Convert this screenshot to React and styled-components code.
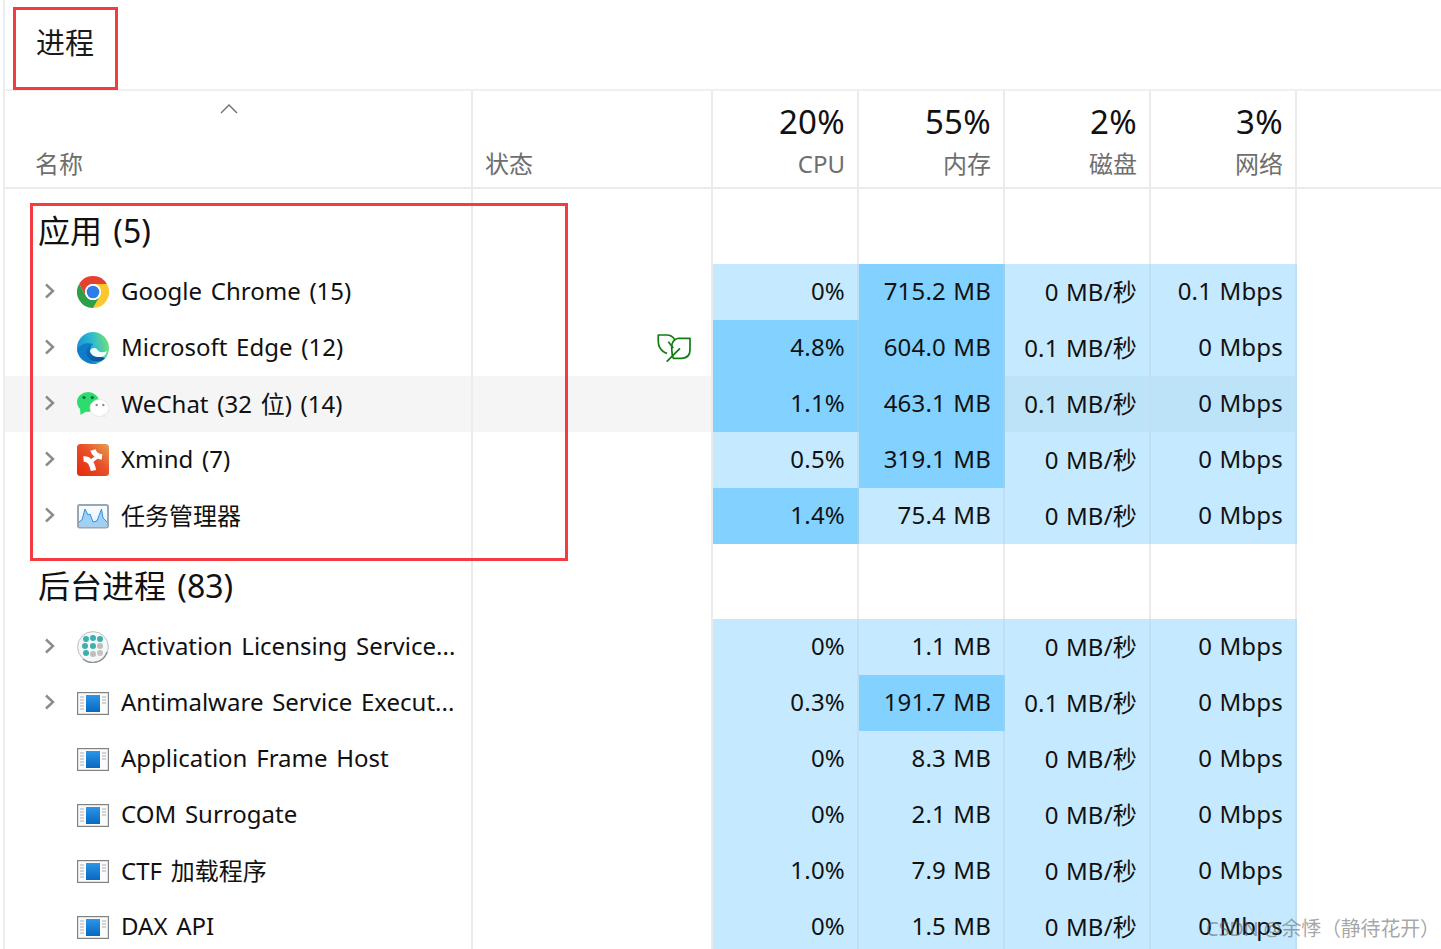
import styled, { createGlobalStyle } from "styled-components";

const GlobalStyle = createGlobalStyle`
  html, body {
    margin: 0;
    padding: 0;
    height: 949px;
    overflow: hidden;
    background: #fff;
  }
  body {
    font-family: "Noto Sans", "Noto Sans CJK SC", sans-serif;
    color: #111;
  }
`;

const COLUMNS = "468px 240px 146px 146px 146px 146px 1fr";

const Page = styled.div`
  position: relative;
  width: 1441px;
  height: 949px;
  overflow: hidden;
  box-sizing: border-box;
  margin-left: 3px;
  border-left: 2px solid #e9eef3;
`;

const TitleBar = styled.div`
  height: 82px;
  padding: 0 0 7px 31px;
  display: flex;
  align-items: center;
  border-bottom: 2px solid #f0f0f0;
  font-size: 29px;
  color: #1a1a1a;
`;

const HeaderRow = styled.div`
  display: grid;
  grid-template-columns: ${COLUMNS};
  height: 96px;
  border-bottom: 2px solid #ebebeb;
`;

const HeaderCell = styled.div`
  box-sizing: border-box;
  border-right: 2px solid #ebebeb;
  display: flex;
  flex-direction: column;
  justify-content: flex-end;
  align-items: ${(p) => (p.$left ? "flex-start" : "flex-end")};
  padding: ${(p) => (p.$left ? "0 0 6px 12px" : "0 12px 6px 0")};
  padding-left: ${(p) => (p.$name ? "30px" : "")};
  position: relative;
  &:last-child {
    border-right: none;
  }
`;

const SortCaret = styled.svg`
  position: absolute;
  top: 12px;
  left: 214px;
  width: 20px;
  height: 12px;
`;

const BigValue = styled.div`
  font-size: 33px;
  line-height: 44px;
  letter-spacing: 0.3px;
  margin-bottom: 3px;
  color: #111;
`;

const ColumnLabel = styled.div`
  font-size: 24px;
  line-height: 34px;
  color: #6e6e6e;
`;

const SectionRow = styled.div`
  display: grid;
  grid-template-columns: ${COLUMNS};
  height: 75px;
`;

const SectionCell = styled.div`
  border-right: 2px solid #ebebeb;
  &:last-child {
    border-right: none;
  }
`;

const SectionName = styled(SectionCell)`
  font-size: 32px;
  line-height: 40px;
  word-spacing: 3px;
  padding: 22px 0 0 33px;
  color: #111;
  white-space: nowrap;
`;

const Row = styled.div`
  display: grid;
  grid-template-columns: ${COLUMNS};
  height: 56px;
`;

const NameCell = styled.div`
  display: flex;
  align-items: center;
  padding-left: 38px;
  border-right: 2px solid #ebebeb;
  background: ${(p) => (p.$hover ? "#f5f5f5" : "#fff")};
  font-size: 24px;
  white-space: nowrap;
  color: #111;
`;

const NameText = styled.span`
  word-spacing: 2.5px;
  margin-top: -3px;
`;

const ChevronSlot = styled.div`
  display: flex;
  width: 14px;
  height: 20px;
  margin: -3px 20px 0 0;
  flex: none;
`;

const AppIcon = styled.svg`
  width: 32px;
  height: 32px;
  margin-right: 12px;
  flex: none;
`;

const StatusCell = styled.div`
  display: flex;
  align-items: center;
  justify-content: flex-end;
  padding: 0 20px 3px 0;
  border-right: 2px solid #ebebeb;
  background: ${(p) => (p.$hover ? "#f5f5f5" : "#fff")};
`;

const HeatCell = styled.div`
  display: flex;
  align-items: center;
  justify-content: flex-end;
  padding: 0 12px 3px 0;
  font-size: 24px;
  letter-spacing: 0.2px;
  word-spacing: 0.8px;
  color: #111;
  background: ${(p) =>
    p.$hot ? "#83d1ff" : p.$hover ? "#bde3f9" : "#c5e9ff"};
  border-right: 2px solid
    ${(p) => (p.$hot ? "#9bcfee" : "#c1dff2")};
`;

const Blank = styled.div``;

const Highlight = styled.div`
  position: absolute;
  box-sizing: border-box;
  border: 3px solid #f43b3f;
  left: ${(p) => p.$x - 5}px;
  top: ${(p) => p.$y}px;
  width: ${(p) => p.$w}px;
  height: ${(p) => p.$h}px;
  pointer-events: none;
`;

const Watermark = styled.div`
  position: absolute;
  left: 1201px;
  top: 915px;
  font-size: 20px;
  line-height: 28px;
  letter-spacing: -0.2px;
  color: rgba(90, 90, 90, 0.55);
  white-space: nowrap;
`;

function Chevron() {
  return (
    <ChevronSlot>
      <svg width="14" height="20" viewBox="0 0 14 20">
        <path d="M3 3.5L10 10L3 16.5" fill="none" stroke="#8a8a8a" strokeWidth="2.4" />
      </svg>
    </ChevronSlot>
  );
}

function ChromeIcon() {
  return (
    <AppIcon viewBox="0 0 32 32">
      <path d="M29.86 8A16 16 0 0 0 2.14 8L9.07 20A8 8 0 0 1 16 8Z" fill="#e5412f" />
      <path d="M16 32A16 16 0 0 0 29.86 8L16 8A8 8 0 0 1 22.93 20Z" fill="#fbc72c" />
      <path d="M2.14 8A16 16 0 0 0 16 32L22.93 20A8 8 0 0 1 9.07 20Z" fill="#2f9e48" />
      <circle cx="16" cy="16" r="8" fill="#fff" />
      <circle cx="16" cy="16" r="6.3" fill="#2f7de8" />
    </AppIcon>
  );
}

function EdgeIcon() {
  return (
    <AppIcon viewBox="0 0 32 32">
      <defs>
        <linearGradient id="edgeTop" x1="0" y1="0.6" x2="1" y2="0.4">
          <stop offset="0" stopColor="#1a8ed2" />
          <stop offset="0.5" stopColor="#2bb8d2" />
          <stop offset="1" stopColor="#6fe07c" />
        </linearGradient>
        <linearGradient id="edgeLow" x1="0" y1="0" x2="1" y2="1">
          <stop offset="0" stopColor="#0e74c0" />
          <stop offset="1" stopColor="#0b4f96" />
        </linearGradient>
      </defs>
      <circle cx="16" cy="16" r="16" fill="url(#edgeTop)" />
      <path d="M0 18C3 12 10 10 16 12C10 13 8 19 10 24C12 28 17 31 21 31.3C12 33 2 28 0 18Z" fill="#0f7cc8" />
      <path d="M16 12C10 13 7.5 19 10 24C13 30 21 32 28 26.5L24 24C19 25.5 14 24 13 19C13 16 14 13.5 16 12Z" fill="url(#edgeLow)" />
      <path d="M13 19C14 15.5 19 15 20.5 18C22.5 20.5 26 21 30 19C29.5 22 27 25 24.5 25C19 25.5 14 24 13 19Z" fill="#f3fbff" />
    </AppIcon>
  );
}

function WeChatIcon() {
  return (
    <AppIcon viewBox="0 0 32 32">
      <ellipse cx="11" cy="14" rx="11" ry="10" fill="#2ddc6e" />
      <path d="M3 20L3.5 27L10 23Z" fill="#2ddc6e" />
      <circle cx="7" cy="9.5" r="1.6" fill="#0d6b34" />
      <circle cx="15.3" cy="9.5" r="1.6" fill="#0d6b34" />
      <ellipse cx="22.5" cy="20" rx="9.5" ry="8.5" fill="#fff" stroke="#e2e2e2" strokeWidth="0.8" />
      <path d="M25 27L29.5 30L28.5 25Z" fill="#ececec" />
      <circle cx="19.7" cy="17" r="1.2" fill="#8f8f8f" />
      <circle cx="26.3" cy="17" r="1.2" fill="#8f8f8f" />
    </AppIcon>
  );
}

function XmindIcon() {
  return (
    <AppIcon viewBox="0 0 32 32">
      <defs>
        <linearGradient id="xmindBg" x1="0" y1="1" x2="1" y2="0">
          <stop offset="0" stopColor="#e6270a" />
          <stop offset="0.55" stopColor="#e8502a" />
          <stop offset="1" stopColor="#e6a050" />
        </linearGradient>
      </defs>
      <rect width="32" height="32" rx="3.5" fill="url(#xmindBg)" />
      <g fill="none" stroke="#fff" strokeWidth="5.4">
        <path d="M16 6C17 10 21 12.5 25 13" />
        <path d="M6.5 15C12 14.5 15 19 16.5 26.5" />
        <path d="M20 13L13 18" strokeWidth="3.4" />
      </g>
    </AppIcon>
  );
}

function TaskManagerIcon() {
  return (
    <AppIcon viewBox="0 0 32 32">
      <defs>
        <linearGradient id="tmBg" x1="0" y1="0" x2="0" y2="1">
          <stop offset="0" stopColor="#fafdff" />
          <stop offset="1" stopColor="#e4f1fc" />
        </linearGradient>
      </defs>
      <rect x="1" y="5" width="30" height="22.4" rx="1.4" fill="url(#tmBg)" stroke="#9aa7b2" strokeWidth="2" />
      <path d="M2 22L5 20L8 9L11 15L13 14L16 22L20 21L24.5 9L26 18L30 22V26.4H2Z" fill="#9fd0f6" />
      <path d="M2 22L5 20L8 9L11 15L13 14L16 22L20 21L24.5 9L26 18L30 22" fill="none" stroke="#2f8fe0" strokeWidth="1" />
    </AppIcon>
  );
}

function ActivationIcon() {
  const dots = [
    [9, 8, "#3cb0ac"], [16, 7, "#3cb0ac"], [23, 8, "#3cb0ac"],
    [8, 15, "#3cb0ac"], [16, 15, "#3cb0ac"], [23, 15, "#bdbdbd"],
    [9, 22, "#3cb0ac"], [16, 23, "#bdbdbd"], [23, 22, "#c4c4c4"],
  ];
  return (
    <AppIcon viewBox="0 0 32 32">
      <circle cx="16" cy="16" r="15.4" fill="#f5f7f8" stroke="#b9c0c4" strokeWidth="1" />
      <path d="M30 21A15 15 0 0 1 6 28" fill="none" stroke="#8b9296" strokeWidth="1.4" />
      {dots.map(([cx, cy, fill]) => (
        <circle key={`${cx}-${cy}`} cx={cx} cy={cy} r="3" fill={fill} />
      ))}
    </AppIcon>
  );
}

function WindowIcon() {
  return (
    <AppIcon viewBox="0 0 32 32">
      <defs>
        <linearGradient id="winBlue" x1="0" y1="0" x2="0" y2="1">
          <stop offset="0" stopColor="#2a96e6" />
          <stop offset="1" stopColor="#0a66c2" />
        </linearGradient>
      </defs>
      <rect x="0.6" y="5.6" width="30.8" height="21.8" fill="#fbfbfb" stroke="#7f8488" strokeWidth="1.2" />
      <rect x="9" y="8" width="14" height="17" fill="url(#winBlue)" />
      <path d="M3 10H7M3 13H7M3 16H7M3 19H7M3 22H7M25 10H29M25 13H29M25 16H29" stroke="#a8acb0" strokeWidth="1" />
    </AppIcon>
  );
}

function LeafIcon() {
  return (
    <svg width="34" height="30" viewBox="0 0 34 30">
      <g fill="none" stroke="#107c10" strokeWidth="1.7" strokeLinejoin="round">
        <path d="M18 8C16 4.5 13 3 9.7 3H1.3C1 9 1.2 12 2.3 14.7C4 18 6.5 20.5 10 21.3" />
        <path d="M33 6.3H21.3C17 7.5 14.7 11 14.7 14.7C14.7 19 15 23 16.3 26.3H24.7C30 26 33 23 33 18Z" />
        <path d="M9.7 29.7L23 16.3M11.3 9.7L16.3 16" />
      </g>
    </svg>
  );
}

const icons = {
  chrome: ChromeIcon,
  edge: EdgeIcon,
  wechat: WeChatIcon,
  xmind: XmindIcon,
  taskmgr: TaskManagerIcon,
  activation: ActivationIcon,
  window: WindowIcon,
};

const apps = [
  { name: "Google Chrome (15)", icon: "chrome", cpu: "0%", mem: "715.2 MB", disk: "0 MB/秒", net: "0.1 Mbps", memHot: true, expand: true },
  { name: "Microsoft Edge (12)", icon: "edge", cpu: "4.8%", mem: "604.0 MB", disk: "0.1 MB/秒", net: "0 Mbps", cpuHot: true, memHot: true, leaf: true, expand: true },
  { name: "WeChat (32 位) (14)", icon: "wechat", cpu: "1.1%", mem: "463.1 MB", disk: "0.1 MB/秒", net: "0 Mbps", cpuHot: true, memHot: true, hover: true, expand: true },
  { name: "Xmind (7)", icon: "xmind", cpu: "0.5%", mem: "319.1 MB", disk: "0 MB/秒", net: "0 Mbps", memHot: true, expand: true },
  { name: "任务管理器", icon: "taskmgr", cpu: "1.4%", mem: "75.4 MB", disk: "0 MB/秒", net: "0 Mbps", cpuHot: true, expand: true },
];

const background = [
  { name: "Activation Licensing Service...", icon: "activation", cpu: "0%", mem: "1.1 MB", disk: "0 MB/秒", net: "0 Mbps", expand: true },
  { name: "Antimalware Service Execut...", icon: "window", cpu: "0.3%", mem: "191.7 MB", disk: "0.1 MB/秒", net: "0 Mbps", memHot: true, expand: true },
  { name: "Application Frame Host", icon: "window", cpu: "0%", mem: "8.3 MB", disk: "0 MB/秒", net: "0 Mbps" },
  { name: "COM Surrogate", icon: "window", cpu: "0%", mem: "2.1 MB", disk: "0 MB/秒", net: "0 Mbps" },
  { name: "CTF 加载程序", icon: "window", cpu: "1.0%", mem: "7.9 MB", disk: "0 MB/秒", net: "0 Mbps" },
  { name: "DAX API", icon: "window", cpu: "0%", mem: "1.5 MB", disk: "0 MB/秒", net: "0 Mbps" },
];

function ProcessRow({ proc }) {
  const Icon = icons[proc.icon];
  return (
    <Row>
      <NameCell $hover={proc.hover}>
        {proc.expand ? <Chevron /> : <ChevronSlot />}
        <Icon />
        <NameText>{proc.name}</NameText>
      </NameCell>
      <StatusCell $hover={proc.hover}>{proc.leaf && <LeafIcon />}</StatusCell>
      <HeatCell $hot={proc.cpuHot} $hover={proc.hover}>{proc.cpu}</HeatCell>
      <HeatCell $hot={proc.memHot} $hover={proc.hover}>{proc.mem}</HeatCell>
      <HeatCell $hover={proc.hover}>{proc.disk}</HeatCell>
      <HeatCell $hover={proc.hover}>{proc.net}</HeatCell>
      <Blank />
    </Row>
  );
}

function Section({ title }) {
  return (
    <SectionRow>
      <SectionName>{title}</SectionName>
      <SectionCell />
      <SectionCell />
      <SectionCell />
      <SectionCell />
      <SectionCell />
      <Blank />
    </SectionRow>
  );
}

function App() {
  return (
    <Page>
      <GlobalStyle />
      <TitleBar>进程</TitleBar>
      <HeaderRow>
        <HeaderCell $left $name>
          <SortCaret viewBox="0 0 20 12">
            <path d="M2 10L10 2L18 10" fill="none" stroke="#6e6e6e" strokeWidth="1.4" />
          </SortCaret>
          <ColumnLabel>名称</ColumnLabel>
        </HeaderCell>
        <HeaderCell $left>
          <ColumnLabel>状态</ColumnLabel>
        </HeaderCell>
        <HeaderCell>
          <BigValue>20%</BigValue>
          <ColumnLabel>CPU</ColumnLabel>
        </HeaderCell>
        <HeaderCell>
          <BigValue>55%</BigValue>
          <ColumnLabel>内存</ColumnLabel>
        </HeaderCell>
        <HeaderCell>
          <BigValue>2%</BigValue>
          <ColumnLabel>磁盘</ColumnLabel>
        </HeaderCell>
        <HeaderCell>
          <BigValue>3%</BigValue>
          <ColumnLabel>网络</ColumnLabel>
        </HeaderCell>
        <HeaderCell />
      </HeaderRow>
      <Section title="应用 (5)" />
      {apps.map((proc) => (
        <ProcessRow key={proc.name} proc={proc} />
      ))}
      <Section title="后台进程 (83)" />
      {background.map((proc) => (
        <ProcessRow key={proc.name} proc={proc} />
      ))}
      <Highlight $x={13} $y={7} $w={105} $h={83} />
      <Highlight $x={30} $y={203} $w={538} $h={358} />
      <Watermark>CSDN @余悸（静待花开）</Watermark>
    </Page>
  );
}

export default App;
